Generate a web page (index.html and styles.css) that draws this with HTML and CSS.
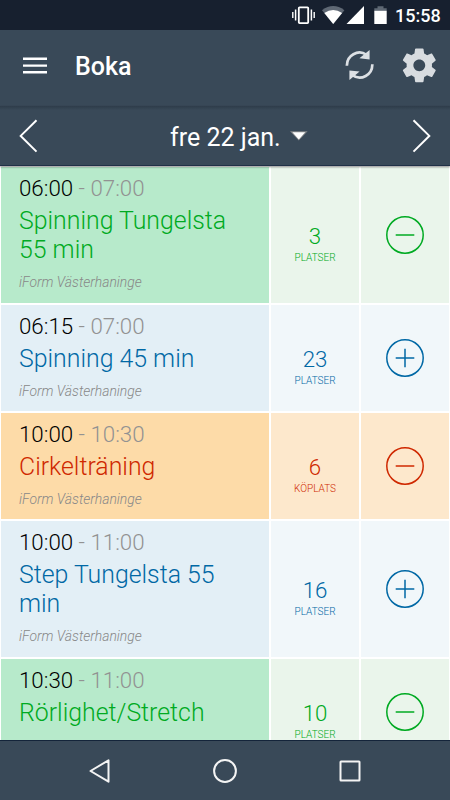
FILE: index.html
```html
<!DOCTYPE html>
<html lang="sv">
<head>
<meta charset="utf-8">
<title>Boka</title>
<link rel="stylesheet" href="styles.css">
</head>
<body>
<div class="statusbar">
  <svg class="status-icons" width="96" height="30" viewBox="291 0 96 30">
    <g fill="none" stroke="#fff">
      <rect x="298.8" y="7.3" width="9.4" height="15.8" rx=".8" stroke-width="1.8"/>
      <path d="M295.6 9.5v11M311.4 9.5v11" stroke-width="1.5"/>
      <path d="M292.8 12v6M314.2 12v6" stroke-width="1.4"/>
    </g>
    <path d="M322 10.2Q333.200 2 344.400 10.200L333.200 24Z" fill="#5f6874"/>
    <path d="M324.300 13Q333.200 7.200 342.100 13L333.200 24Z" fill="#fff"/>
    <path d="M364 6v18H346.500Z" fill="#fff"/>
    <path d="M374.300 11V8.200h3.200V6.300h6v1.900h3.200V11Z" fill="#5f6874"/>
    <path d="M374.300 10.800h12.400V24h-12.400Z" fill="#fff"/>
  </svg>
  <span class="clock">15:58</span>
</div>
<header class="appbar">
  <svg class="menu" width="24" height="18" viewBox="0 0 24 18"><path d="M0 1.800h24M0 8.600h24M0 15.300h24" stroke="#fff" stroke-width="2.400"/></svg>
  <h1>Boka</h1>
  <svg class="refresh" width="30" height="32" viewBox="345 49 30 32">
    <g fill="none" stroke="#dce0e4" stroke-width="2.700">
      <path d="M347.900 65.800A12.600 12.900 0 0 1 367.500 54.800"/>
      <path d="M373.300 64.200A12.600 12.900 0 0 1 353.500 75.200"/>
    </g>
    <path d="M370.600 50v9.400l-10.200-1.100ZM350.400 80v-9.600l10.200 1Z" fill="#dce0e4"/>
  </svg>
  <svg class="gear" width="40.600" height="40.600" viewBox="0 0 24 24"><path fill="#d8dce0" d="M19.430 12.980c.04-.32.07-.64.07-.98s-.03-.66-.07-.98l2.110-1.650c.19-.15.24-.42.12-.64l-2-3.460c-.12-.22-.39-.3-.61-.22l-2.490 1c-.52-.4-1.080-.73-1.690-.98l-.38-2.650C14.460 2.180 14.250 2 14 2h-4c-.25 0-.46.18-.49.42l-.38 2.650c-.61.25-1.170.59-1.690.98l-2.490-1c-.23-.09-.49 0-.61.22l-2 3.460c-.13.22-.07.49.12.64l2.110 1.650c-.04.32-.07.65-.07.98s.03.66.07.98l-2.110 1.650c-.19.15-.24.42-.12.64l2 3.460c.12.22.39.3.61.22l2.490-1c.52.4 1.080.73 1.690.98l.38 2.650c.03.24.24.42.49.42h4c.25 0 .46-.18.49-.42l.38-2.650c.61-.25 1.170-.59 1.690-.98l2.490 1c.23.09.49 0 .61-.22l2-3.460c.12-.22.07-.49-.12-.64l-2.110-1.650zM12 15.500c-1.930 0-3.500-1.570-3.500-3.500s1.570-3.500 3.500-3.500 3.500 1.570 3.500 3.500-1.570 3.500-3.500 3.500z"/></svg>
</header>
<nav class="datebar">
  <svg width="20" height="34" viewBox="0 0 20 34"><path d="M17.500 1.200 1.700 16.900 17.500 32.600" fill="none" stroke="#fff" stroke-width="2"/></svg>
  <div class="date"><span>fre 22 jan.</span><svg width="20" height="12" viewBox="0 0 20 12"><path d="M1 1.200h17.600L9.800 10.500Z" fill="#858789"/><path d="M3.400 2.200h12.800L9.800 9.400Z" fill="#fff"/></svg></div>
  <svg width="20" height="34" viewBox="0 0 20 34"><path d="M2.500 1.200 18.300 16.900 2.500 32.600" fill="none" stroke="#fff" stroke-width="2"/></svg>
</nav>
<main class="list">
  <article class="row booked">
    <div class="info"><p class="time">06:00 <span>- 07:00</span></p><h2>Spinning Tungelsta 55 min</h2><p class="venue">iForm Västerhaninge</p></div>
    <div class="slots"><b>3</b><small>PLATSER</small></div>
    <div class="action"><svg width="40" height="40" viewBox="0 0 40 40"><circle cx="20" cy="20" r="18.200"/><path d="M10.700 20h18.600"/></svg></div>
  </article>
  <article class="row open">
    <div class="info"><p class="time">06:15 <span>- 07:00</span></p><h2>Spinning 45 min</h2><p class="venue">iForm Västerhaninge</p></div>
    <div class="slots"><b>23</b><small>PLATSER</small></div>
    <div class="action"><svg width="40" height="40" viewBox="0 0 40 40"><circle cx="20" cy="20" r="18.200"/><path d="M10.700 20h18.600M20 10.700v18.600"/></svg></div>
  </article>
  <article class="row queued">
    <div class="info"><p class="time">10:00 <span>- 10:30</span></p><h2>Cirkelträning</h2><p class="venue">iForm Västerhaninge</p></div>
    <div class="slots"><b>6</b><small>KÖPLATS</small></div>
    <div class="action"><svg width="40" height="40" viewBox="0 0 40 40"><circle cx="20" cy="20" r="18.200"/><path d="M10.700 20h18.600"/></svg></div>
  </article>
  <article class="row open">
    <div class="info"><p class="time">10:00 <span>- 11:00</span></p><h2>Step Tungelsta 55 min</h2><p class="venue">iForm Västerhaninge</p></div>
    <div class="slots"><b>16</b><small>PLATSER</small></div>
    <div class="action"><svg width="40" height="40" viewBox="0 0 40 40"><circle cx="20" cy="20" r="18.200"/><path d="M10.700 20h18.600M20 10.700v18.600"/></svg></div>
  </article>
  <article class="row booked">
    <div class="info"><p class="time">10:30 <span>- 11:00</span></p><h2>Rörlighet/Stretch</h2></div>
    <div class="slots"><b>10</b><small>PLATSER</small></div>
    <div class="action"><svg width="40" height="40" viewBox="0 0 40 40"><circle cx="20" cy="20" r="18.200"/><path d="M10.700 20h18.600"/></svg></div>
  </article>
</main>
<footer class="navbar">
  <svg width="24" height="26" viewBox="0 0 24 26"><path d="M20.500 2.300v21.400L2.500 13Z"/></svg>
  <svg width="26" height="26" viewBox="0 0 26 26"><circle cx="13" cy="13" r="10.900"/></svg>
  <svg width="24" height="26" viewBox="0 0 24 26"><rect x="2.500" y="3.500" width="19" height="19" rx=".5"/></svg>
</footer>
</body>
</html>
```

FILE: styles.css
```css
* { box-sizing: border-box; margin: 0; padding: 0; }
body {
  width: 450px;
  height: 800px;
  overflow: hidden;
  display: flex;
  flex-direction: column;
  font-family: Roboto, "Liberation Sans", sans-serif;
  background: #fff;
}
svg { display: block; flex: none; }
.statusbar {
  flex: none;
  height: 30px;
  display: flex;
  align-items: center;
  padding-left: 291px;
  background: #17202f;
  color: #fff;
}
.clock { margin-left: 8px; padding-top: 2px; font-size: 18px; font-weight: 500; line-height: 26px; }
.appbar {
  flex: none;
  height: 76px;
  display: flex;
  align-items: center;
  padding: 0 10px 6px 23px;
  background: #394958;
  color: #fff;
}
.menu { margin-top: 1px; }
.appbar h1 { margin-left: 28px; font-size: 25px; font-weight: 500; line-height: 30px; padding-top: 3px; }
.refresh { margin-left: auto; }
.gear { margin-left: 25px; }
.datebar {
  flex: none;
  height: 60px;
  display: flex;
  align-items: center;
  padding: 0 19px;
  background: linear-gradient(#2e3c4a, #394958 4px);
  border-bottom: 1px solid #203147;
  box-shadow: 0 1px 2px rgba(0, 0, 0, .45);
  position: relative;
  color: #fff;
}
.date { flex: 1; display: flex; align-items: center; gap: 8px; padding: 4px 0 0 131px; font-size: 25px; line-height: 30px; }
.date svg { margin-top: -3px; }
.list {
  height: 574px;
  overflow: hidden;
  display: flex;
  flex-direction: column;
  gap: 2px;
  padding: 1px 1px 0;
}
.row { flex: none; display: grid; grid-template-columns: 268px 88px 88px; gap: 2px; color: var(--ink); min-height: 106px; }
.booked { --ink: #00aa22; --main: #b7eacb; --side: #eaf5eb; }
.open { --ink: #0068a5; --main: #e3eff6; --side: #f1f7fa; }
.queued { --ink: #cf2800; --main: #fddba8; --side: #fde8cc; }
.info { padding: 8px 18px 11.2px; background: var(--main); font-weight: 300; }
.time { font-size: 22.3px; line-height: 27px; color: #000; }
.time span { color: #929292; }
.info h2 { margin-top: 4px; font-size: 24.85px; font-weight: 300; line-height: 29.4px; }
.venue { margin-top: 9.6px; font-size: 13.9px; line-height: 17px; font-style: italic; color: #888; }
.slots, .action { background: var(--side); display: flex; flex-direction: column; align-items: center; justify-content: center; }
.slots { padding-top: 18px; }
.slots b { font-size: 22.3px; font-weight: 300; line-height: 27px; }
.slots small { font-size: 10px; font-weight: 300; line-height: 14px; margin-top: 1px; }
.action svg { fill: none; stroke: var(--ink); stroke-width: 1.5; }
.navbar {
  flex: none;
  height: 60px;
  display: flex;
  align-items: center;
  justify-content: space-between;
  padding: 0 88px;
  background: #394958;
  border-top: 1px solid #14243a;
}
.navbar svg { fill: none; stroke: #f4f4f4; stroke-width: 2; stroke-linejoin: round; }
```
